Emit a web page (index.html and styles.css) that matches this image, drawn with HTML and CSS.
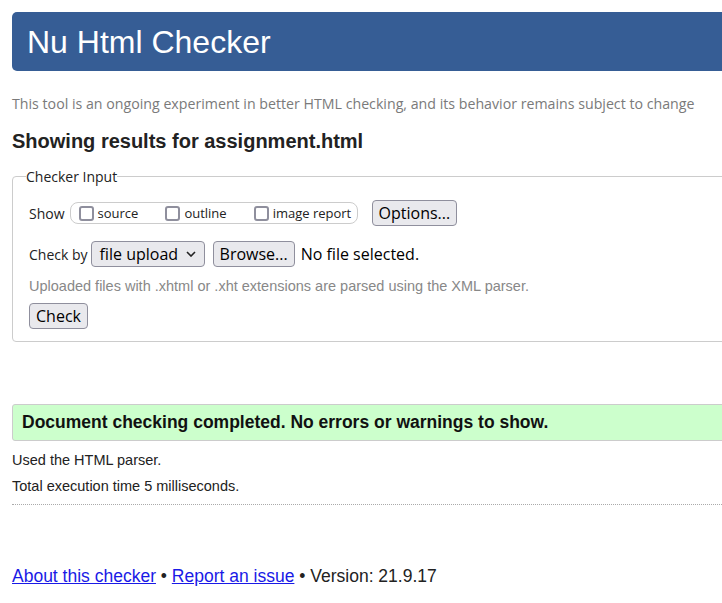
FILE: index.html
```html
<!DOCTYPE html>
<html lang="en">
<head>
<meta charset="utf-8">
<title>Nu Html Checker</title>
<link rel="stylesheet" href="styles.css">
</head>
<body>
<h1 class="banner">Nu Html Checker</h1>
<p class="intro">This tool is an ongoing experiment in better HTML checking, and its behavior remains subject to change</p>
<h2 class="results-title">Showing results for assignment.html</h2>
<form class="checker-form">
  <fieldset class="checker-input">
    <legend class="legend">Checker Input</legend>
    <div class="row show-row">
      <span class="label">Show</span>
      <span class="show-group">
        <label class="opt"><input type="checkbox" class="cb"><span>source</span></label>
        <label class="opt"><input type="checkbox" class="cb"><span>outline</span></label>
        <label class="opt"><input type="checkbox" class="cb"><span>image report</span></label>
      </span>
      <button type="button" class="btn">Options...</button>
    </div>
    <div class="row check-row">
      <span class="label">Check by</span>
      <span class="select">file upload
        <svg class="chev" width="10" height="6" viewBox="0 0 10 6"><path d="M1 1 L5 5 L9 1" fill="none" stroke="#222" stroke-width="1.6"/></svg>
      </span>
      <button type="button" class="btn">Browse...</button>
      <span class="nofile">No file selected.</span>
    </div>
    <p class="hint">Uploaded files with .xhtml or .xht extensions are parsed using the XML parser.</p>
    <button type="button" class="btn">Check</button>
  </fieldset>
</form>
<p class="success">Document checking completed. No errors or warnings to show.</p>
<p class="stat">Used the HTML parser.</p>
<p class="stat">Total execution time 5 milliseconds.</p>
<hr class="sep">
<p class="footer"><a href="#">About this checker</a> • <a href="#">Report an issue</a> • Version: 21.9.17</p>
</body>
</html>
```
FILE: styles.css
```css
html { overflow-x: hidden; }
body {
  margin: 0;
  padding: 12px 0 0 12px;
  width: 760px;
  font-family: "Liberation Sans", Arial, sans-serif;
  font-size: 14px;
  color: #222;
  background: #fff;
}
.banner {
  margin: 0;
  height: 59px;
  box-sizing: border-box;
  padding: 12px 15px 0;
  background: #365d95;
  color: #fff;
  border-radius: 5px;
  font-weight: normal;
  font-size: 32px;
  line-height: 36px;
}
.intro {
  margin: 24px 0 0;
  font-family: "Open Sans", sans-serif;
  font-size: 14.2px;
  color: #7a7a7a;
  line-height: 18px;
  white-space: nowrap;
}
.results-title {
  margin: 16px 0 0;
  font-size: 20px;
  line-height: 24px;
  color: #222;
}
.checker-form { margin: 14px 0 0; }
.checker-input {
  margin: 0;
  padding: 14px 16px 12px;
  border: 1px solid #ccc;
  border-radius: 4px;
}
.legend {
  padding: 0;
  margin-left: -3px;
  font-family: "Open Sans", sans-serif;
  font-size: 14px;
  color: #222;
}
.row { display: flex; align-items: center; white-space: nowrap; }
.label {
  font-family: "Open Sans", sans-serif;
  font-size: 14px;
  color: #222;
  flex-shrink: 0;
}
.show-group {
  display: inline-flex;
  align-items: center;
  flex-shrink: 0;
  margin-left: 5px;
  height: 22px;
  box-sizing: border-box;
  width: 288px;
  padding: 0 8px;
  border: 1px solid #ccc;
  border-radius: 8px;
}
.opt {
  display: inline-flex;
  align-items: center;
  font-family: "Open Sans", sans-serif;
  font-size: 13px;
  color: #222;
  margin-right: 27px;
  white-space: nowrap;
}
.opt:last-child { margin-right: 0; }
.cb {
  appearance: none;
  -webkit-appearance: none;
  width: 15px;
  height: 15px;
  margin: 0 4px 0 0;
  border: 2px solid #8f8f9d;
  border-radius: 3px;
  box-sizing: border-box;
  flex-shrink: 0;
}
.btn, .select {
  font-family: "Open Sans", sans-serif;
  font-size: 16px;
  color: #000;
  background: #e9e9ed;
  border: 1px solid #8f8f9d;
  border-radius: 4px;
  height: 26px;
  box-sizing: border-box;
  padding: 0 6px;
  line-height: 22px;
  white-space: nowrap;
  flex-shrink: 0;
}
.show-row .btn { margin-left: 14px; }
.check-row { margin-top: 15px; }
.select {
  display: inline-flex;
  align-items: center;
  justify-content: space-between;
  width: 114px;
  margin-left: 3px;
  padding: 0 8px;
}
.chev { margin-left: 6px; flex-shrink: 0; }
.check-row .btn { margin-left: 8px; }
.nofile {
  margin-left: 6px;
  font-family: "Open Sans", sans-serif;
  font-size: 16px;
  color: #000;
}
.hint {
  margin: 10px 0 8px;
  font-size: 14.5px;
  color: #888;
  line-height: 18px;
}
.success {
  margin: 62px 0 0;
  padding: 0 9px;
  height: 37px;
  box-sizing: border-box;
  line-height: 35px;
  background: #ccffcc;
  border: 1px solid #ccc;
  border-radius: 3px;
  font-weight: bold;
  font-size: 17.5px;
  color: #111;
}
.stat {
  margin: 11px 0 0;
  font-size: 14.5px;
  line-height: 16px;
}
.stat + .stat { margin-top: 10px; }
.sep {
  margin: 10px 0 0;
  border: 0;
  border-top: 1px dotted #aaa;
}
.footer {
  margin: 61px 0 0;
  font-size: 17.5px;
  color: #222;
}
.footer a { color: #1a1ae6; }
```
